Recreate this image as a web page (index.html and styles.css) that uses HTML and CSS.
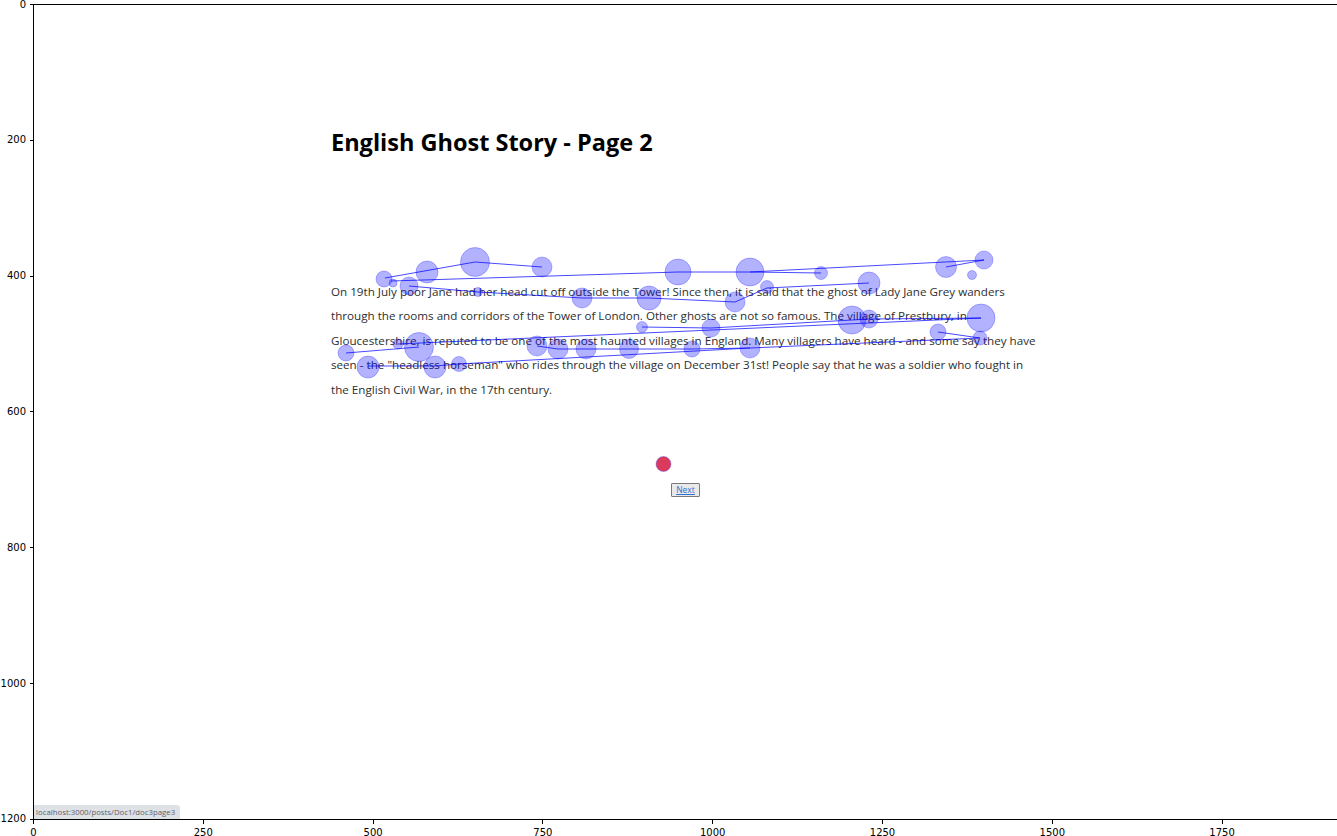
FILE: index.html
```html
<!DOCTYPE html>
<html lang="en">
<head>
<meta charset="utf-8">
<title>Gaze plot</title>
<link rel="stylesheet" href="styles.css">
</head>
<body>
<div class="figure">
  <div class="row">
    <div class="yaxis">
      <div class="ytick"><span class="ylabel">0</span><span class="ymark"></span></div>
      <div class="ytick"><span class="ylabel">200</span><span class="ymark"></span></div>
      <div class="ytick"><span class="ylabel">400</span><span class="ymark"></span></div>
      <div class="ytick"><span class="ylabel">600</span><span class="ymark"></span></div>
      <div class="ytick"><span class="ylabel">800</span><span class="ymark"></span></div>
      <div class="ytick"><span class="ylabel">1000</span><span class="ymark"></span></div>
      <div class="ytick"><span class="ylabel">1200</span><span class="ymark"></span></div>
    </div>
    <div class="plot">
      <div class="page">
        <div class="content">
          <h1 class="title">English Ghost Story - Page 2</h1>
          <p class="story">On 19th July poor Jane had her head cut off outside the Tower! Since then, it is said that the ghost of Lady Jane Grey wanders<br>through the rooms and corridors of the Tower of London. Other ghosts are not so famous. The village of Prestbury, in<br>Gloucestershire, is reputed to be one of the most haunted villages in England. Many villagers have heard - and some say they have<br>seen - the "headless horseman" who rides through the village on December 31st! People say that he was a soldier who fought in<br>the English Civil War, in the 17th century.</p>
          <div class="actions"><button class="next-btn" type="button"><span class="next-link">Next</span></button></div>
        </div>
      </div>
      <svg class="gaze" width="1303" height="814" viewBox="34 5 1303 814" xmlns="http://www.w3.org/2000/svg">
        <g class="paths">
          <polyline points="385,278 475,262 542,267"/>
          <polyline points="391,281 678,272 750,272 984,260 946,267"/>
          <polyline points="750,272 821,273"/>
          <polyline points="409,286 478,292 582,298 649,298 735,302 767,288 869,283"/>
          <polyline points="642,327 711,328 852,320 869,319 981,318"/>
          <polyline points="938,332 980,338"/>
          <polyline points="346,353 419,347"/>
          <polyline points="398,344 981,318"/>
          <polyline points="537,346 558,349 586,349 629,349 692,349 750,348 980,338"/>
          <polyline points="368,366 435,366 459,364 750,348"/>
        </g>
        <g class="fixations">
          <circle cx="384" cy="279" r="8"/>
          <circle cx="393" cy="283" r="4"/>
          <circle cx="409" cy="286" r="9"/>
          <circle cx="427" cy="272" r="11"/>
          <circle cx="475" cy="262" r="14.5"/>
          <circle cx="542" cy="267" r="10"/>
          <circle cx="478" cy="292" r="4.5"/>
          <circle cx="582" cy="298" r="10"/>
          <circle cx="649" cy="298" r="12"/>
          <circle cx="678" cy="272" r="13"/>
          <circle cx="750" cy="272" r="14"/>
          <circle cx="821" cy="273" r="6.5"/>
          <circle cx="767" cy="287" r="6.5"/>
          <circle cx="735" cy="302" r="10"/>
          <circle cx="869" cy="283" r="11"/>
          <circle cx="946" cy="267" r="10.5"/>
          <circle cx="984" cy="260" r="9"/>
          <circle cx="972" cy="275" r="4.5"/>
          <circle cx="642" cy="327" r="5.5"/>
          <circle cx="711" cy="328" r="9"/>
          <circle cx="852" cy="320" r="14"/>
          <circle cx="869" cy="319" r="9"/>
          <circle cx="981" cy="318" r="14"/>
          <circle cx="938" cy="332" r="8"/>
          <circle cx="980" cy="338" r="7"/>
          <circle cx="346" cy="353" r="8"/>
          <circle cx="398" cy="344" r="5"/>
          <circle cx="419" cy="347" r="14.5"/>
          <circle cx="537" cy="346" r="10"/>
          <circle cx="558" cy="349" r="10"/>
          <circle cx="586" cy="349" r="10"/>
          <circle cx="629" cy="349" r="9.5"/>
          <circle cx="692" cy="349" r="8"/>
          <circle cx="750" cy="348" r="10"/>
          <circle cx="368" cy="367" r="11"/>
          <circle cx="435" cy="367" r="11"/>
          <circle cx="459" cy="364" r="7.5"/>
        </g>
        <circle class="current" cx="663.5" cy="464" r="7.5"/>
      </svg>
      <div class="status">localhost:3000/posts/Doc1/doc3page3</div>
    </div>
  </div>
  <div class="xaxis">
    <div class="xtick"><span class="xmark"></span><span class="xlabel">0</span></div>
    <div class="xtick"><span class="xmark"></span><span class="xlabel">250</span></div>
    <div class="xtick"><span class="xmark"></span><span class="xlabel">500</span></div>
    <div class="xtick"><span class="xmark"></span><span class="xlabel">750</span></div>
    <div class="xtick"><span class="xmark"></span><span class="xlabel">1000</span></div>
    <div class="xtick"><span class="xmark"></span><span class="xlabel">1250</span></div>
    <div class="xtick"><span class="xmark"></span><span class="xlabel">1500</span></div>
    <div class="xtick"><span class="xmark"></span><span class="xlabel">1750</span></div>
  </div>
</div>
</body>
</html>
```
FILE: styles.css
```css
html, body {
  margin: 0;
  padding: 0;
  overflow: hidden;
  background: #ffffff;
}

.figure {
  padding-top: 4px;
  width: 1337px;
  height: 836px;
  box-sizing: border-box;
  font-family: "DejaVu Sans", sans-serif;
}

.row {
  display: flex;
  align-items: flex-start;
}

/* ---------- y axis ---------- */
.yaxis {
  width: 33px;
  flex-shrink: 0;
  height: 815px;
  padding: 0.5px 0;
  display: flex;
  flex-direction: column;
  justify-content: space-between;
}

.ytick {
  height: 0;
  display: flex;
  align-items: center;
  justify-content: flex-end;
}

.ylabel {
  font-size: 10px;
  line-height: 12px;
  color: #000;
  margin-right: 3.5px;
}

.ymark {
  width: 3.5px;
  height: 1px;
  background: #000;
}

/* ---------- plot area ---------- */
.plot {
  position: relative;
  width: 1304px;
  flex-shrink: 0;
  height: 814px;
  border-top: 1px solid #000;
  border-left: 1px solid #000;
  border-bottom: 1px solid #000;
  overflow: hidden;
}

.page {
  padding: 121.5px 0 0 297px;
  font-family: "Open Sans", "Noto Sans", sans-serif;
}

.content {
  width: 709px;
}

.title {
  margin: 0;
  font-size: 23.5px;
  line-height: 30px;
  font-weight: 700;
  color: #000;
  white-space: nowrap;
}

.story {
  margin: 123px 0 0 0;
  font-size: 11.65px;
  line-height: 24.5px;
  color: #2e2e2e;
  white-space: nowrap;
}

.actions {
  margin-top: 81px;
  display: flex;
  justify-content: center;
}

.next-btn {
  height: 13.5px;
  width: 29px;
  padding: 0;
  border: 1px solid #7a7a7a;
  border-radius: 1px;
  background: #e9e9e9;
  display: flex;
  align-items: center;
  justify-content: center;
  font-family: "Open Sans", sans-serif;
}

.next-link {
  font-size: 8.5px;
  line-height: 10px;
  color: #2f6fd6;
  text-decoration: underline;
}

/* ---------- gaze overlay ---------- */
.gaze {
  position: absolute;
  left: 0;
  top: 0;
  pointer-events: none;
}

.paths polyline {
  fill: none;
  stroke: #0000ff;
  stroke-width: 0.9;
  stroke-opacity: 0.8;
}

.fixations circle {
  fill: #0000ff;
  fill-opacity: 0.3;
  stroke: #0000ff;
  stroke-opacity: 0.25;
  stroke-width: 1;
}

.current {
  fill: #dc3a5c;
  stroke: #5050e0;
  stroke-opacity: 0.5;
  stroke-width: 0.8;
}

/* ---------- status bar ---------- */
.status {
  position: absolute;
  left: 0;
  bottom: 0;
  height: 14px;
  width: 146px;
  box-sizing: border-box;
  padding: 0 0 0 2px;
  background: #dee1e6;
  border-top-right-radius: 3px;
  color: #5f5f6a;
  font-family: "Open Sans", sans-serif;
  font-size: 7.8px;
  line-height: 14px;
  white-space: nowrap;
}

/* ---------- x axis ---------- */
.xaxis {
  margin-left: 33.5px;
  width: 1188.6px;
  display: flex;
  justify-content: space-between;
}

.xtick {
  width: 0;
  display: flex;
  flex-direction: column;
  align-items: center;
}

.xmark {
  width: 1px;
  height: 3.5px;
  background: #000;
  flex-shrink: 0;
}

.xlabel {
  margin-top: 3.5px;
  font-size: 10px;
  line-height: 12px;
  color: #000;
  white-space: nowrap;
}
```
